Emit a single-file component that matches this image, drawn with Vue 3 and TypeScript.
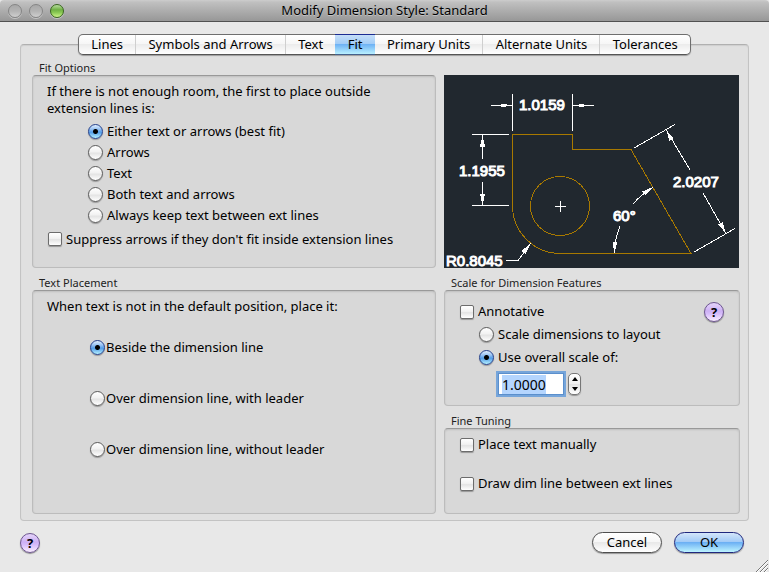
<script setup lang="ts">
import { onMounted, ref } from 'vue'

const tabs: string[] = [
  'Lines',
  'Symbols and Arrows',
  'Text',
  'Fit',
  'Primary Units',
  'Alternate Units',
  'Tolerances',
]
const activeTab = ref('Fit')

const fitOptions: string[] = [
  'Either text or arrows (best fit)',
  'Arrows',
  'Text',
  'Both text and arrows',
  'Always keep text between ext lines',
]
const fit = ref(fitOptions[0])
const suppressArrows = ref(false)

const placements: string[] = [
  'Beside the dimension line',
  'Over dimension line, with leader',
  'Over dimension line, without leader',
]
const placement = ref(placements[0])

const annotative = ref(false)
const scaleMode = ref<'layout' | 'overall'>('overall')
const scale = ref('1.0000')
const scaleInput = ref<HTMLInputElement | null>(null)

const placeManually = ref(false)
const drawDimLine = ref(false)

function step(delta: number): void {
  const next = Math.max(0, (parseFloat(scale.value) || 0) + delta)
  scale.value = next.toFixed(4)
}

onMounted(() => {
  scaleInput.value?.focus()
  scaleInput.value?.select()
})
</script>

<template>
  <div class="window">
    <header class="titlebar">
      <div class="lights">
        <button class="light" type="button" aria-label="Close"></button>
        <button class="light" type="button" aria-label="Minimize"></button>
        <button class="light green" type="button" aria-label="Zoom"></button>
      </div>
      <h1>Modify Dimension Style: Standard</h1>
    </header>

    <nav class="tabs" role="tablist">
      <button
        v-for="tab in tabs"
        :key="tab"
        type="button"
        role="tab"
        class="tab"
        :class="{ active: tab === activeTab }"
        :aria-selected="tab === activeTab"
        @click="activeTab = tab"
      >{{ tab }}</button>
    </nav>

    <main class="panel">
      <fieldset class="group">
        <legend>Fit Options</legend>
        <div class="box">
          <p>If there is not enough room, the first to place outside<br>extension lines is:</p>
          <div class="fit-list">
            <label v-for="option in fitOptions" :key="option" class="row">
              <input v-model="fit" type="radio" name="fit" :value="option">
              <span>{{ option }}</span>
            </label>
          </div>
          <label class="row suppress">
            <input v-model="suppressArrows" type="checkbox">
            <span>Suppress arrows if they don't fit inside extension lines</span>
          </label>
        </div>
      </fieldset>

      <div class="preview">
        <svg viewBox="0 0 295 193" role="img" aria-label="Dimension preview">
          <g class="part">
            <path d="M68.5 131V59.5H128.5V74.5H187L247 178.5H116A48 48 0 0 1 68.5 131" />
            <circle cx="116" cy="131" r="29.5" />
          </g>
          <g class="dim">
            <path d="M68.5 19V56M128.5 19V56M47 30.5H68M129 30.5H150" />
            <path d="M28 59.5H65M28 130.5H65M38.5 60V84M38.5 107V130" />
            <path d="M111 131.5H122M116.5 126V137" />
            <path d="M62 185.5H74L87 168" />
            <path d="M190 73L231 49.5M250 177L291 153.5M222 54.5L246 95M259 118L282 158.5" />
            <path d="M209 112.5A76 76 0 0 0 189 129M176 151A76 76 0 0 0 170.5 178" />
          </g>
          <g class="arrow">
            <path d="M68 30.5L57 28.5V32.5ZM129 30.5L140 28.5V32.5Z" />
            <path d="M38.5 60L36 71.5H41ZM38.5 130L36 119H41Z" />
            <path d="M87 168L81.5 179L77.5 176Z" />
            <path d="M222 54.5L225.5 66L229.5 63.5ZM282 158.5L274.5 149.5L278.5 147Z" />
            <path d="M209 112L198.5 116.5L201 120ZM170.5 178.5L168.5 167L173 167.5Z" />
          </g>
          <g class="value">
            <text x="75" y="35">1.0159</text>
            <text x="15" y="101">1.1955</text>
            <text x="2" y="191">R0.8045</text>
            <text x="229" y="112">2.0207</text>
            <text x="169" y="146">60°</text>
          </g>
        </svg>
      </div>

      <fieldset class="group">
        <legend>Text Placement</legend>
        <div class="box">
          <p>When text is not in the default position, place it:</p>
          <div class="placement-list">
            <label v-for="option in placements" :key="option" class="row">
              <input v-model="placement" type="radio" name="placement" :value="option">
              <span>{{ option }}</span>
            </label>
          </div>
        </div>
      </fieldset>

      <div class="stack">
        <fieldset class="group">
          <legend>Scale for Dimension Features</legend>
          <div class="box scale-box">
            <div class="split">
              <label class="row">
                <input v-model="annotative" type="checkbox">
                <span>Annotative</span>
              </label>
              <button class="help" type="button">?</button>
            </div>
            <label class="row indent">
              <input v-model="scaleMode" type="radio" name="scale" value="layout">
              <span>Scale dimensions to layout</span>
            </label>
            <label class="row indent">
              <input v-model="scaleMode" type="radio" name="scale" value="overall">
              <span>Use overall scale of:</span>
            </label>
            <div class="spinner">
              <input ref="scaleInput" v-model="scale" class="number" type="text" aria-label="Overall scale">
              <div class="stepper">
                <button type="button" aria-label="Increase" @click="step(1)">
                  <svg viewBox="0 0 6 4"><path d="M3 0L6 4H0Z" /></svg>
                </button>
                <button type="button" aria-label="Decrease" @click="step(-1)">
                  <svg viewBox="0 0 6 4"><path d="M3 4L6 0H0Z" /></svg>
                </button>
              </div>
            </div>
          </div>
        </fieldset>

        <fieldset class="group fill">
          <legend>Fine Tuning</legend>
          <div class="box tuning-box">
            <label class="row">
              <input v-model="placeManually" type="checkbox">
              <span>Place text manually</span>
            </label>
            <label class="row">
              <input v-model="drawDimLine" type="checkbox">
              <span>Draw dim line between ext lines</span>
            </label>
          </div>
        </fieldset>
      </div>
    </main>

    <footer class="footer">
      <button class="help" type="button">?</button>
      <div class="actions">
        <button class="push" type="button">Cancel</button>
        <button class="push default" type="button">OK</button>
      </div>
    </footer>

    <svg class="grip" viewBox="0 0 12 12" aria-hidden="true">
      <path class="grip-light" d="M1 12L12 1M5 12L12 5M9 12L12 9" />
      <path d="M0 12L12 0M4 12L12 4M8 12L12 8" />
    </svg>
  </div>
</template>

<style>
body {
  background: #e8e8e8;
}
</style>

<style scoped>
.window {
  position: relative;
  display: flex;
  flex-direction: column;
  box-sizing: border-box;
  min-height: 100vh;
  background: #e8e8e8;
  color: #000;
  font-family: "Lucida Grande", "Noto Sans", "Open Sans", sans-serif;
  font-size: 13px;
  line-height: 17px;
}

button,
input {
  margin: 0;
  padding: 0;
  color: inherit;
  font: inherit;
}

.titlebar {
  display: grid;
  grid-template-columns: 1fr auto 1fr;
  align-items: center;
  height: 21px;
  padding: 0 8px;
  border-bottom: 1px solid #515151;
  border-radius: 4px 4px 0 0;
  background: linear-gradient(#cdcdcd, #c0c0c0 10%, #979797);
}

.titlebar h1 {
  margin: 0;
  font-size: 13px;
  font-weight: 400;
  text-shadow: 0 1px 0 rgba(255, 255, 255, 0.35);
}

.lights {
  display: flex;
  gap: 7px;
}

.light {
  width: 14px;
  height: 14px;
  border: 1px solid #858585;
  border-radius: 50%;
  background: linear-gradient(#a8a8a8, #b4b4b4 50%, #cfcfcf);
  box-shadow: 0 1px 0 rgba(255, 255, 255, 0.4);
}

.light.green {
  border-color: #39651f;
  background: linear-gradient(#b9dca0, #6fb043 40%, #8ccb55 65%, #cdf58a);
}

.tabs {
  position: relative;
  z-index: 1;
  display: flex;
  align-self: center;
  box-sizing: border-box;
  width: calc(100% - 156px);
  min-width: max-content;
  height: 21px;
  margin-top: 12px;
  border: 1px solid #6e6e6e;
  border-bottom-color: #555;
  border-radius: 5px;
  background: linear-gradient(#fff, #f6f6f6 48%, #ececec 50%, #fff);
  box-shadow: 0 1px 1px rgba(0, 0, 0, 0.3);
}

.tab {
  flex: 1 1 auto;
  padding: 0 12px;
  border: 0;
  border-left: 1px solid #cfcfcf;
  background: none;
  line-height: 19px;
  white-space: nowrap;
}

.tab:first-child {
  border-left: 0;
}

.tab.active {
  margin: -1px 0;
  border: 0;
  border-top: 1px solid #1c2c92;
  border-bottom: 1px solid #44608c;
  background: linear-gradient(#c5def8, #a3cdf7 45%, #6fb3f5 50%, #b9f0ff);
}

.tab.active + .tab {
  border-left: 0;
}

.panel {
  display: grid;
  flex: 1;
  grid-template-columns: 404fr 296fr;
  grid-template-rows: auto 1fr;
  gap: 7px 8px;
  margin: -11px 20px 0;
  padding: 15px 8px 6px 11px;
  border: 1px solid #c3c3c3;
  border-top-color: #b0b0b0;
  border-radius: 4px;
  background: #e0e0e0;
  box-shadow: inset 0 1px 1px rgba(0, 0, 0, 0.08);
}

.group {
  display: flex;
  flex-direction: column;
  min-width: 0;
  margin: 0;
  padding: 0;
  border: 0;
}

legend {
  height: 15px;
  padding: 0 7px;
  color: #222;
  font-size: 11px;
  line-height: 15px;
}

.box {
  flex: 1;
  padding: 7px 14px 19px;
  border: 1px solid #bcbcbc;
  border-top-color: #999;
  border-radius: 4px;
  background: #d8d8d8;
  box-shadow: inset 0 1px 2px rgba(0, 0, 0, 0.12);
}

.box p {
  margin: 0;
}

.row {
  display: flex;
  align-items: center;
  gap: 4px;
  height: 23px;
}

.fit-list {
  margin: 4px 0 4px 41px;
}

.fit-list .row {
  height: 21px;
}

.suppress {
  height: 18px;
  padding-left: 1px;
}

.placement-list {
  margin: 7px 0 0 43px;
}

.placement-list .row {
  gap: 1px;
  height: 51px;
}

input[type='radio'],
input[type='checkbox'] {
  flex: none;
  box-sizing: border-box;
  margin: 0;
  appearance: none;
  border: 1px solid #6c6c6c;
  background: linear-gradient(#fff, #f2f2f2 45%, #e4e4e4 55%, #fff);
  box-shadow: 0 1px 1px rgba(0, 0, 0, 0.3);
}

input[type='radio'] {
  width: 15px;
  height: 15px;
  border-color: #5c5c5c;
  border-radius: 50%;
}

input[type='checkbox'] {
  width: 14px;
  height: 14px;
  border-radius: 2px;
}

input[type='radio']:checked {
  border-color: #24408c;
  background: radial-gradient(circle at 50% 50%, #000 0, #000 2px, transparent 3px),
    linear-gradient(#e2f0ff, #8fbdf2 35%, #529ce8 55%, #b4f0ff);
}

input[type='checkbox']:checked {
  background: #6fb3f5;
}

.preview {
  margin: 15px 1px 0 0;
  background: #21282f;
}

.preview svg {
  display: block;
  width: 100%;
  height: 100%;
}

.part {
  fill: none;
  stroke: #a87900;
  shape-rendering: crispEdges;
}

.dim {
  fill: none;
  stroke: #fff;
  shape-rendering: crispEdges;
}

.arrow {
  fill: #fff;
  shape-rendering: crispEdges;
}

.value {
  fill: #fff;
  stroke: #fff;
  stroke-width: 1;
  font-family: "Liberation Sans", Arial, sans-serif;
  font-size: 15px;
}

.stack {
  display: flex;
  flex-direction: column;
  gap: 7px;
}

.fill {
  flex: 1;
}

.scale-box {
  padding: 9px 15px 8px;
}

.split {
  display: flex;
  align-items: center;
  justify-content: space-between;
}

.indent {
  margin-left: 19px;
}

.spinner {
  display: flex;
  align-items: center;
  gap: 4px;
  height: 26px;
  margin: 2px 0 0 38px;
}

.number {
  box-sizing: border-box;
  width: 66px;
  height: 22px;
  padding: 0 3px;
  border: 1px solid #5b8fcc;
  outline: 2px solid #76a5da;
  outline-offset: 0;
  border-radius: 0;
  background: #fff;
  font-size: 14px;
}

.number::selection {
  background: #b4d5fe;
  color: #000;
}

.stepper {
  display: flex;
  flex-direction: column;
  box-sizing: border-box;
  width: 13px;
  height: 22px;
  border: 1px solid #777;
  border-radius: 5px;
  background: linear-gradient(#fff, #f0f0f0 48%, #e2e2e2 50%, #fff);
  box-shadow: 0 1px 1px rgba(0, 0, 0, 0.3);
}

.stepper button {
  display: flex;
  flex: 1;
  align-items: center;
  justify-content: center;
  border: 0;
  background: none;
}

.stepper svg {
  width: 6px;
  height: 4px;
}

.tuning-box {
  display: flex;
  flex-direction: column;
  gap: 16px;
  padding: 4px 15px 18px;
}

.help {
  box-sizing: border-box;
  width: 20px;
  height: 20px;
  border: 1px solid #6d5690;
  border-radius: 50%;
  background: linear-gradient(#e4d4fa, #cdb0f4 45%, #d6bcfa 60%, #fbeeff);
  box-shadow: 0 1px 1px rgba(0, 0, 0, 0.4);
  font-weight: 700;
  line-height: 18px;
  text-align: center;
}

.footer {
  display: flex;
  align-items: center;
  justify-content: space-between;
  box-sizing: border-box;
  height: 52px;
  padding: 0 25px 9px 20px;
}

.actions {
  display: flex;
  gap: 12px;
}

.push {
  box-sizing: border-box;
  width: 70px;
  height: 21px;
  border: 1px solid #4f4f4f;
  border-radius: 11px;
  background: linear-gradient(#fff, #f6f6f6 48%, #e9e9e9 50%, #fff);
  box-shadow: 0 1px 1px rgba(0, 0, 0, 0.35);
  line-height: 19px;
}

.push.default {
  border-color: #20287e;
  background: linear-gradient(#d4e6fa, #a3cbf7 45%, #6cb0f4 50%, #bdf4ff);
}

.grip {
  position: absolute;
  right: 1px;
  bottom: 1px;
  width: 12px;
  height: 12px;
  fill: none;
  stroke: #777;
}

.grip-light {
  stroke: #fff;
}
</style>
